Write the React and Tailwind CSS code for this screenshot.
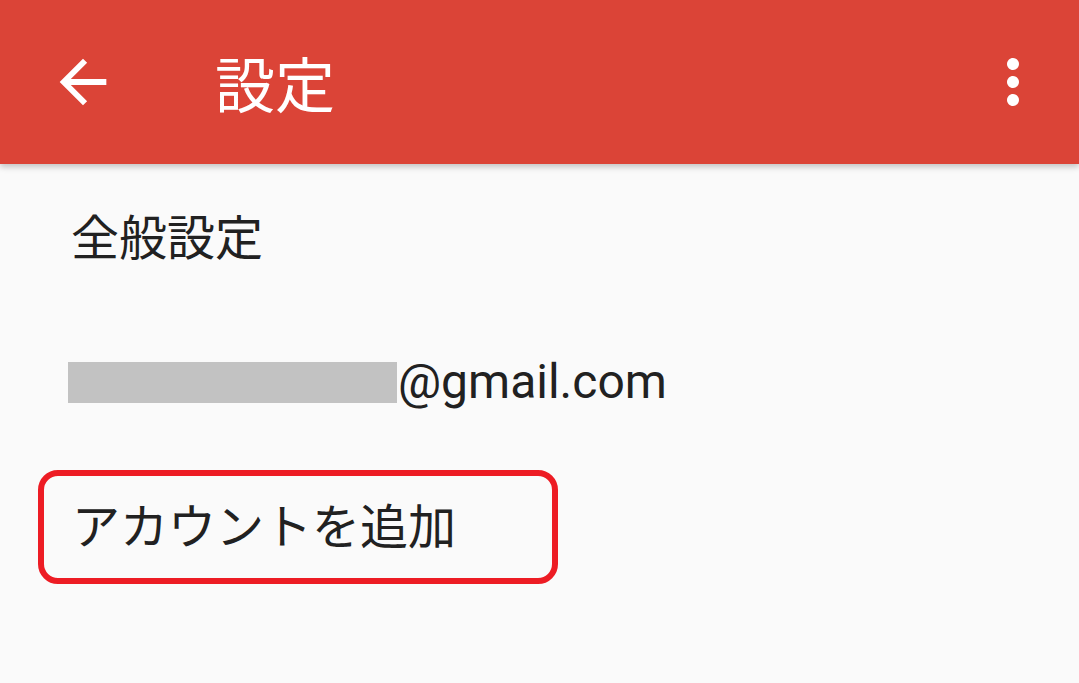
export default function App() {
  const cjk = { fontFamily: '"Noto Sans CJK JP", "Noto Sans", sans-serif' };
  return (
    <div className="w-[1079px] h-[683px] bg-[#fafafa] overflow-hidden text-[#212121]" style={cjk}>
      <div className="relative z-10 h-[164px] bg-[#db4437] shadow-[0_3px_6px_rgba(0,0,0,0.22)] flex items-center">
        <div className="ml-[48px] w-[70px] h-[70px] flex items-center justify-center">
          <svg viewBox="0 0 24 24" width="70" height="70" fill="#ffffff">
            <path d="M20 11H7.83l5.59-5.59L12 4l-8 8 8 8 1.41-1.41L7.83 13H20v-2z" />
          </svg>
        </div>
        <div className="ml-[97px] text-[60px] leading-none text-white">設定</div>
        <div className="ml-auto mr-[30px] w-[72px] h-[72px]">
          <svg viewBox="0 0 24 24" width="72" height="72" fill="#ffffff">
            <path d="M12 8c1.1 0 2-.9 2-2s-.9-2-2-2-2 .9-2 2 .9 2 2 2zm0 2c-1.1 0-2 .9-2 2s.9 2 2 2 2-.9 2-2-.9-2-2-2zm0 6c-1.1 0-2 .9-2 2s.9 2 2 2 2-.9 2-2-.9-2-2-2z" />
          </svg>
        </div>
      </div>
      <div className="h-[152px] flex items-center pl-[71px] pb-[12px]">
        <span className="text-[48px] leading-none">全般設定</span>
      </div>
      <div className="h-[132px] flex items-center pl-[68px]">
        <div className="w-[329px] h-[41px] bg-[#c2c2c2]" />
        <span className="ml-[1px] text-[48px] leading-none" style={{ fontFamily: 'Roboto, "Noto Sans", sans-serif' }}>@gmail.com</span>
      </div>
      <div className="mt-[22px] ml-[38px] w-[520px] h-[114px] border-[6px] border-[#ed1c24] rounded-[20px] flex items-center pl-[28px] pb-[8px]">
        <span className="text-[48px] leading-none">アカウントを追加</span>
      </div>
    </div>
  );
}
